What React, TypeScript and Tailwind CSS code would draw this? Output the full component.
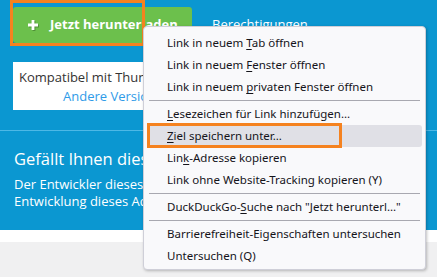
import React from 'react';

type Item = { pre: string; key?: string; post?: string; active?: boolean } | 'sep';

const items: Item[] = [
  { pre: 'Link in neuem ', key: 'T', post: 'ab öffnen' },
  { pre: 'Link in neuem ', key: 'F', post: 'enster öffnen' },
  { pre: 'Link in neuem ', key: 'p', post: 'rivaten Fenster öffnen' },
  'sep',
  { pre: '', key: 'L', post: 'esezeichen für Link hinzufügen…' },
  { pre: '', key: 'Z', post: 'iel speichern unter…', active: true },
  { pre: 'Lin', key: 'k', post: '-Adresse kopieren' },
  { pre: 'Link ohne Website-Tracking kopieren (Y)' },
  'sep',
  { pre: 'DuckDuckGo-', key: 'S', post: 'uche nach "Jetzt herunterl…"' },
  'sep',
  { pre: 'Barrierefreiheit-Eigenschaften untersuchen' },
  { pre: 'Untersuchen (Q)' },
];

const ContextMenu: React.FC = () => (
  <div className="absolute left-[143px] top-[26px] w-[283px] h-[244px] rounded-[4px] border border-[#cfcfd8] bg-[#f9f9fb] pt-[5px] shadow-[1px_1px_3px_rgba(0,0,0,0.25)] font-['Noto_Sans',sans-serif] text-[11.5px] text-[#15141a]">
    {items.map((it, i) =>
      it === 'sep' ? (
        <div key={i} className="h-[5px] px-[5px] pt-[2px]">
          <div className="h-px bg-[#a8a8b0]" />
        </div>
      ) : (
        <div
          key={i}
          className={`mx-[3px] flex h-[22px] items-center rounded-[3px] pl-[20px] ${it.active ? 'bg-[#e0e0e6]' : ''}`}
        >
          <span className="whitespace-nowrap">
            {it.pre}
            {it.key && <span className="underline underline-offset-[2px]">{it.key}</span>}
            {it.post}
          </span>
        </div>
      )
    )}
  </div>
);

export default function App() {
  return (
    <div className="relative h-[277px] w-[437px] overflow-hidden bg-[#f0f0f1] font-['Open_Sans',sans-serif]">
      <div className="bg-[#0b97d1] pb-[20px]">
        {/* Button row */}
        <div className="flex items-center pl-[13px] pt-[7px]">
          <div className="flex h-[36px] w-[179px] items-center rounded-[3px] bg-[#6cc04c] pl-[15px] shadow-[0_1px_0_rgba(0,0,0,0.15)]">
            <svg width="10" height="10" viewBox="0 0 10 10" className="drop-shadow-[1px_1px_0_rgba(0,0,0,0.25)]">
              <path d="M3.6 0h2.8v3.6H10v2.8H6.4V10H3.6V6.4H0V3.6h3.6z" fill="#ffffff" />
            </svg>
            <span className="ml-[12px] text-[13px] font-bold text-white">Jetzt herunterladen</span>
          </div>
          <span className="ml-[20px] text-[13px] text-white">Berechtigungen</span>
        </div>

        {/* Compat box */}
        <div className="ml-[13px] mt-[19px] h-[48px] w-[411px] bg-white pl-[6px] pt-[6px] text-[13px] leading-[19px]">
          <div className="text-[#333]">Kompatibel mit Thunderbird</div>
          <div className="pl-[44px] text-[#2f9be8]">Andere Versionen</div>
        </div>

        <div className="mt-[20px] h-px bg-[#4db8e6]" />

        {/* Support section */}
        <div className="pl-[14px] pt-[16px] text-white">
          <div className="text-[16.5px] leading-[23px]">Gefällt Ihnen dieses Add-on?</div>
          <div className="mt-[6px] text-[13px] leading-[17px]">
            Der Entwickler dieses Add-ons bittet um Ihre Unterstützung für die
            <br />
            Entwicklung dieses Add-ons durch eine kleine Spende.
          </div>
        </div>
      </div>
      <div className="h-[12px] bg-white" />

      {/* Highlight over button */}
      <div className="absolute left-[10px] top-0 h-[46px] w-[135px] border-[3px] border-[#f5821f]" />

      <ContextMenu />

      {/* Highlight over menu item */}
      <div className="absolute left-[147px] top-[123px] h-[25px] w-[195px] border-[3px] border-[#f5821f]" />
    </div>
  );
}
